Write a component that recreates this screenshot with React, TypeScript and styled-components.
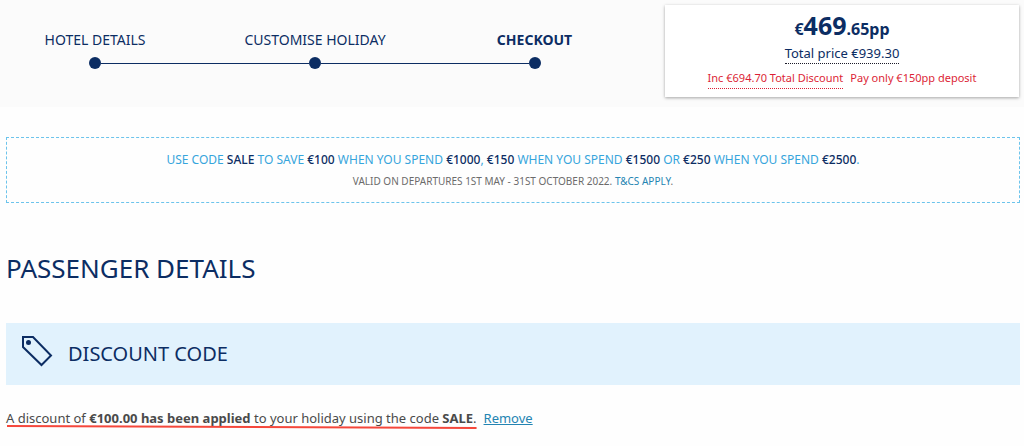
import React from "react";
import styled, { createGlobalStyle } from "styled-components";

const navy = "#0c2d63";
const sky = "#36a5dc";
const link = "#2484b2";
const red = "#dc1f36";

const GlobalStyle = createGlobalStyle`
  *, *::before, *::after { box-sizing: border-box; }
  body {
    margin: 0;
    background: #fefefe;
    color: #4a4a4a;
    font-family: "Noto Sans", "Open Sans", sans-serif;
    font-size: 13px;
    line-height: 20px;
  }
`;

const Header = styled.header`
  display: flex;
  align-items: flex-start;
  padding: 5px 5px 10px 0;
  background: #fbfbfb;
`;

const Steps = styled.ol`
  flex: 1;
  display: grid;
  grid-template-columns: 190fr 250fr 189fr;
  margin: 0;
  padding: 24px 36px 0 0;
  list-style: none;
`;

const Step = styled.li<{ $current?: boolean }>`
  color: ${navy};
  text-align: center;
  white-space: nowrap;
  font-size: 14px;
  line-height: 22px;
  font-weight: ${(p) => (p.$current ? 700 : 400)};
`;

const Track = styled.div`
  display: flex;
  align-items: center;
  margin-top: 6px;
`;

const Line = styled.span<{ $hidden?: boolean }>`
  flex: 1;
  height: 1px;
  background: ${(p) => (p.$hidden ? "transparent" : navy)};
`;

const Dot = styled.span`
  width: 12px;
  height: 12px;
  border-radius: 50%;
  background: ${navy};
`;

const PriceCard = styled.section`
  flex: 0 0 354px;
  min-height: 92px;
  padding: 6px 8px 0;
  background: #fff;
  box-shadow: 0 1px 3px rgba(0, 0, 0, 0.35);
  color: ${navy};
  text-align: center;
`;

const Price = styled.p`
  margin: 0;
  font-size: 16px;
  line-height: 28px;
  font-weight: 700;
`;

const PriceWhole = styled.span`
  font-size: 25px;
`;

const Dotted = styled.span`
  border-bottom: 1px dotted currentColor;
`;

const TotalRow = styled.div`
  display: flex;
  justify-content: center;
`;

const Total = styled(Dotted)`
  line-height: 20px;
  border-bottom-color: #1b1b2a;
`;

const Savings = styled.div`
  display: flex;
  justify-content: center;
  gap: 7px;
  margin-top: 4px;
  color: ${red};
  font-size: 11px;
  line-height: 20px;
  white-space: nowrap;
`;

const Main = styled.main`
  padding: 30px 4px 16px 6px;
`;

const Promo = styled.aside`
  padding: 11px 8px;
  border: 1px dashed #6cc4ec;
  text-align: center;
  text-transform: uppercase;
`;

const PromoText = styled.p`
  margin: 0;
  color: ${sky};
  font-size: 12px;
  line-height: 22px;
`;

const Key = styled.span`
  color: ${navy};
  font-weight: 500;
`;

const Terms = styled.p`
  margin: 0;
  color: #6b6b6b;
  font-size: 10px;
  line-height: 20px;
`;

const TermsLink = styled.a`
  color: ${link};
  text-decoration: none;
`;

const Title = styled.h1`
  margin: 46px 0 36px;
  color: ${navy};
  font-size: 26px;
  line-height: 38px;
  font-weight: 400;
`;

const Banner = styled.div`
  display: flex;
  align-items: flex-start;
  gap: 15px;
  padding: 12px 15px;
  background: #e1f2fd;
  color: ${navy};
`;

const BannerTitle = styled.h2`
  margin: 0;
  font-size: 20px;
  line-height: 38px;
  font-weight: 400;
`;

const Notice = styled.p`
  display: flex;
  gap: 7px;
  margin: 23px 0 0;
  white-space: nowrap;
`;

const Message = styled.span`
  position: relative;
`;

const Stroke = styled.svg`
  position: absolute;
  left: 0;
  bottom: -1px;
  width: 100%;
  height: 4px;
`;

const Remove = styled.a`
  color: ${link};
  text-decoration: underline;
`;

const steps = ["HOTEL DETAILS", "CUSTOMISE HOLIDAY", "CHECKOUT"];

const TagIcon = () => (
  <svg width="32" height="32" viewBox="0 0 32 32" fill="none" aria-hidden="true">
    <path d="M2 2H12L30 20.500L20.500 30L2 12Z" stroke="currentColor" strokeWidth="2" />
    <circle cx="7.500" cy="7.500" r="2.500" fill="currentColor" />
  </svg>
);

export default function App() {
  return (
    <>
      <GlobalStyle />
      <Header>
        <Steps>
          {steps.map((label, i) => (
            <Step key={label} $current={i === steps.length - 1}>
              {label}
              <Track>
                <Line $hidden={i === 0} />
                <Dot />
                <Line $hidden={i === steps.length - 1} />
              </Track>
            </Step>
          ))}
        </Steps>
        <PriceCard>
          <Price>
            €<PriceWhole>469</PriceWhole>.65pp
          </Price>
          <TotalRow>
            <Total>Total price €939.30</Total>
          </TotalRow>
          <Savings>
            <Dotted>Inc €694.70 Total Discount</Dotted>
            <span>Pay only €150pp deposit</span>
          </Savings>
        </PriceCard>
      </Header>
      <Main>
        <Promo>
          <PromoText>
            Use code <Key>SALE</Key> to save <Key>€100</Key> when you spend <Key>€1000</Key>,{" "}
            <Key>€150</Key> when you spend <Key>€1500</Key> or <Key>€250</Key> when you spend{" "}
            <Key>€2500</Key>.
          </PromoText>
          <Terms>
            Valid on departures 1st May - 31st October 2022. <TermsLink href="#terms">T&amp;Cs apply</TermsLink>.
          </Terms>
        </Promo>
        <Title>PASSENGER DETAILS</Title>
        <Banner>
          <TagIcon />
          <BannerTitle>DISCOUNT CODE</BannerTitle>
        </Banner>
        <Notice>
          <Message>
            A discount of <b>€100.00 has been applied</b> to your holiday using the code <b>SALE</b>.
            <Stroke viewBox="0 0 468 4" preserveAspectRatio="none" aria-hidden="true">
              <path d="M1 1L468 3" stroke="#f5473b" strokeWidth="2" />
            </Stroke>
          </Message>
          <Remove href="#remove">Remove</Remove>
        </Notice>
      </Main>
    </>
  );
}
